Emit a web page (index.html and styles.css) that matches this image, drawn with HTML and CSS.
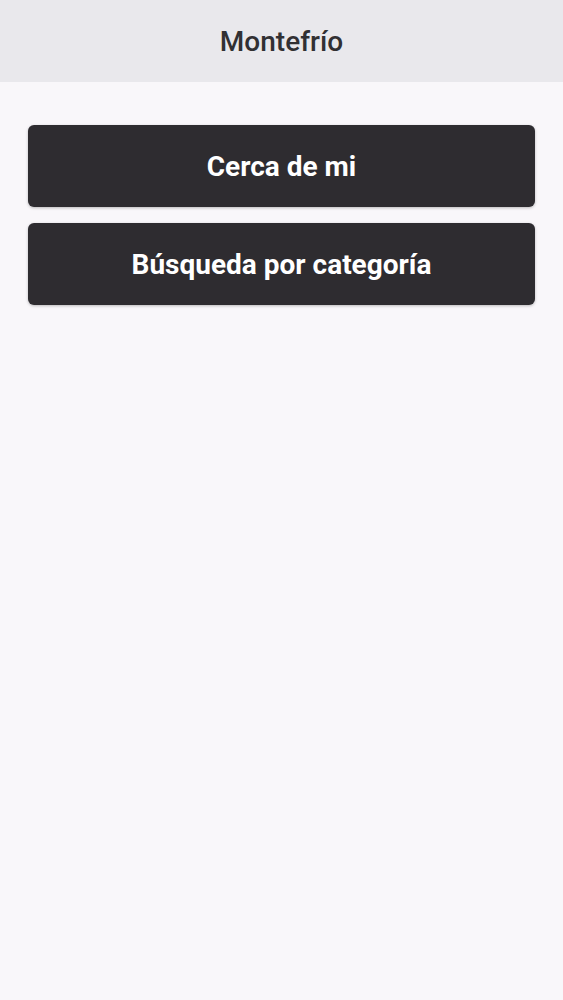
FILE: index.html
```html
<!DOCTYPE html>
<html lang="es">
<head>
<meta charset="utf-8">
<title>Montefrío</title>
<link rel="stylesheet" href="styles.css">
</head>
<body>
<header class="topbar">
  <h1 class="title">Montefrío</h1>
</header>
<main class="content">
  <button class="btn">Cerca de mi</button>
  <button class="btn">Búsqueda por categoría</button>
</main>
</body>
</html>
```
FILE: styles.css
```css
html, body {
  margin: 0;
  padding: 0;
  height: 100%;
}
body {
  background: #f9f7fa;
  font-family: Roboto, "Liberation Sans", sans-serif;
}
.topbar {
  height: 82px;
  background: #e9e8ec;
  display: flex;
  align-items: center;
  justify-content: center;
}
.title {
  margin: 0;
  font-size: 28px;
  font-weight: 500;
  color: #313033;
}
.content {
  display: flex;
  flex-direction: column;
  gap: 16px;
  padding: 43px 28px 0;
}
.btn {
  height: 82px;
  border: none;
  border-radius: 6px;
  background: #2e2c30;
  color: #ffffff;
  font-family: Roboto, "Liberation Sans", sans-serif;
  font-size: 28px;
  font-weight: 700;
  box-shadow: 0 1px 3px rgba(0,0,0,0.25);
  padding: 0;
}
```
